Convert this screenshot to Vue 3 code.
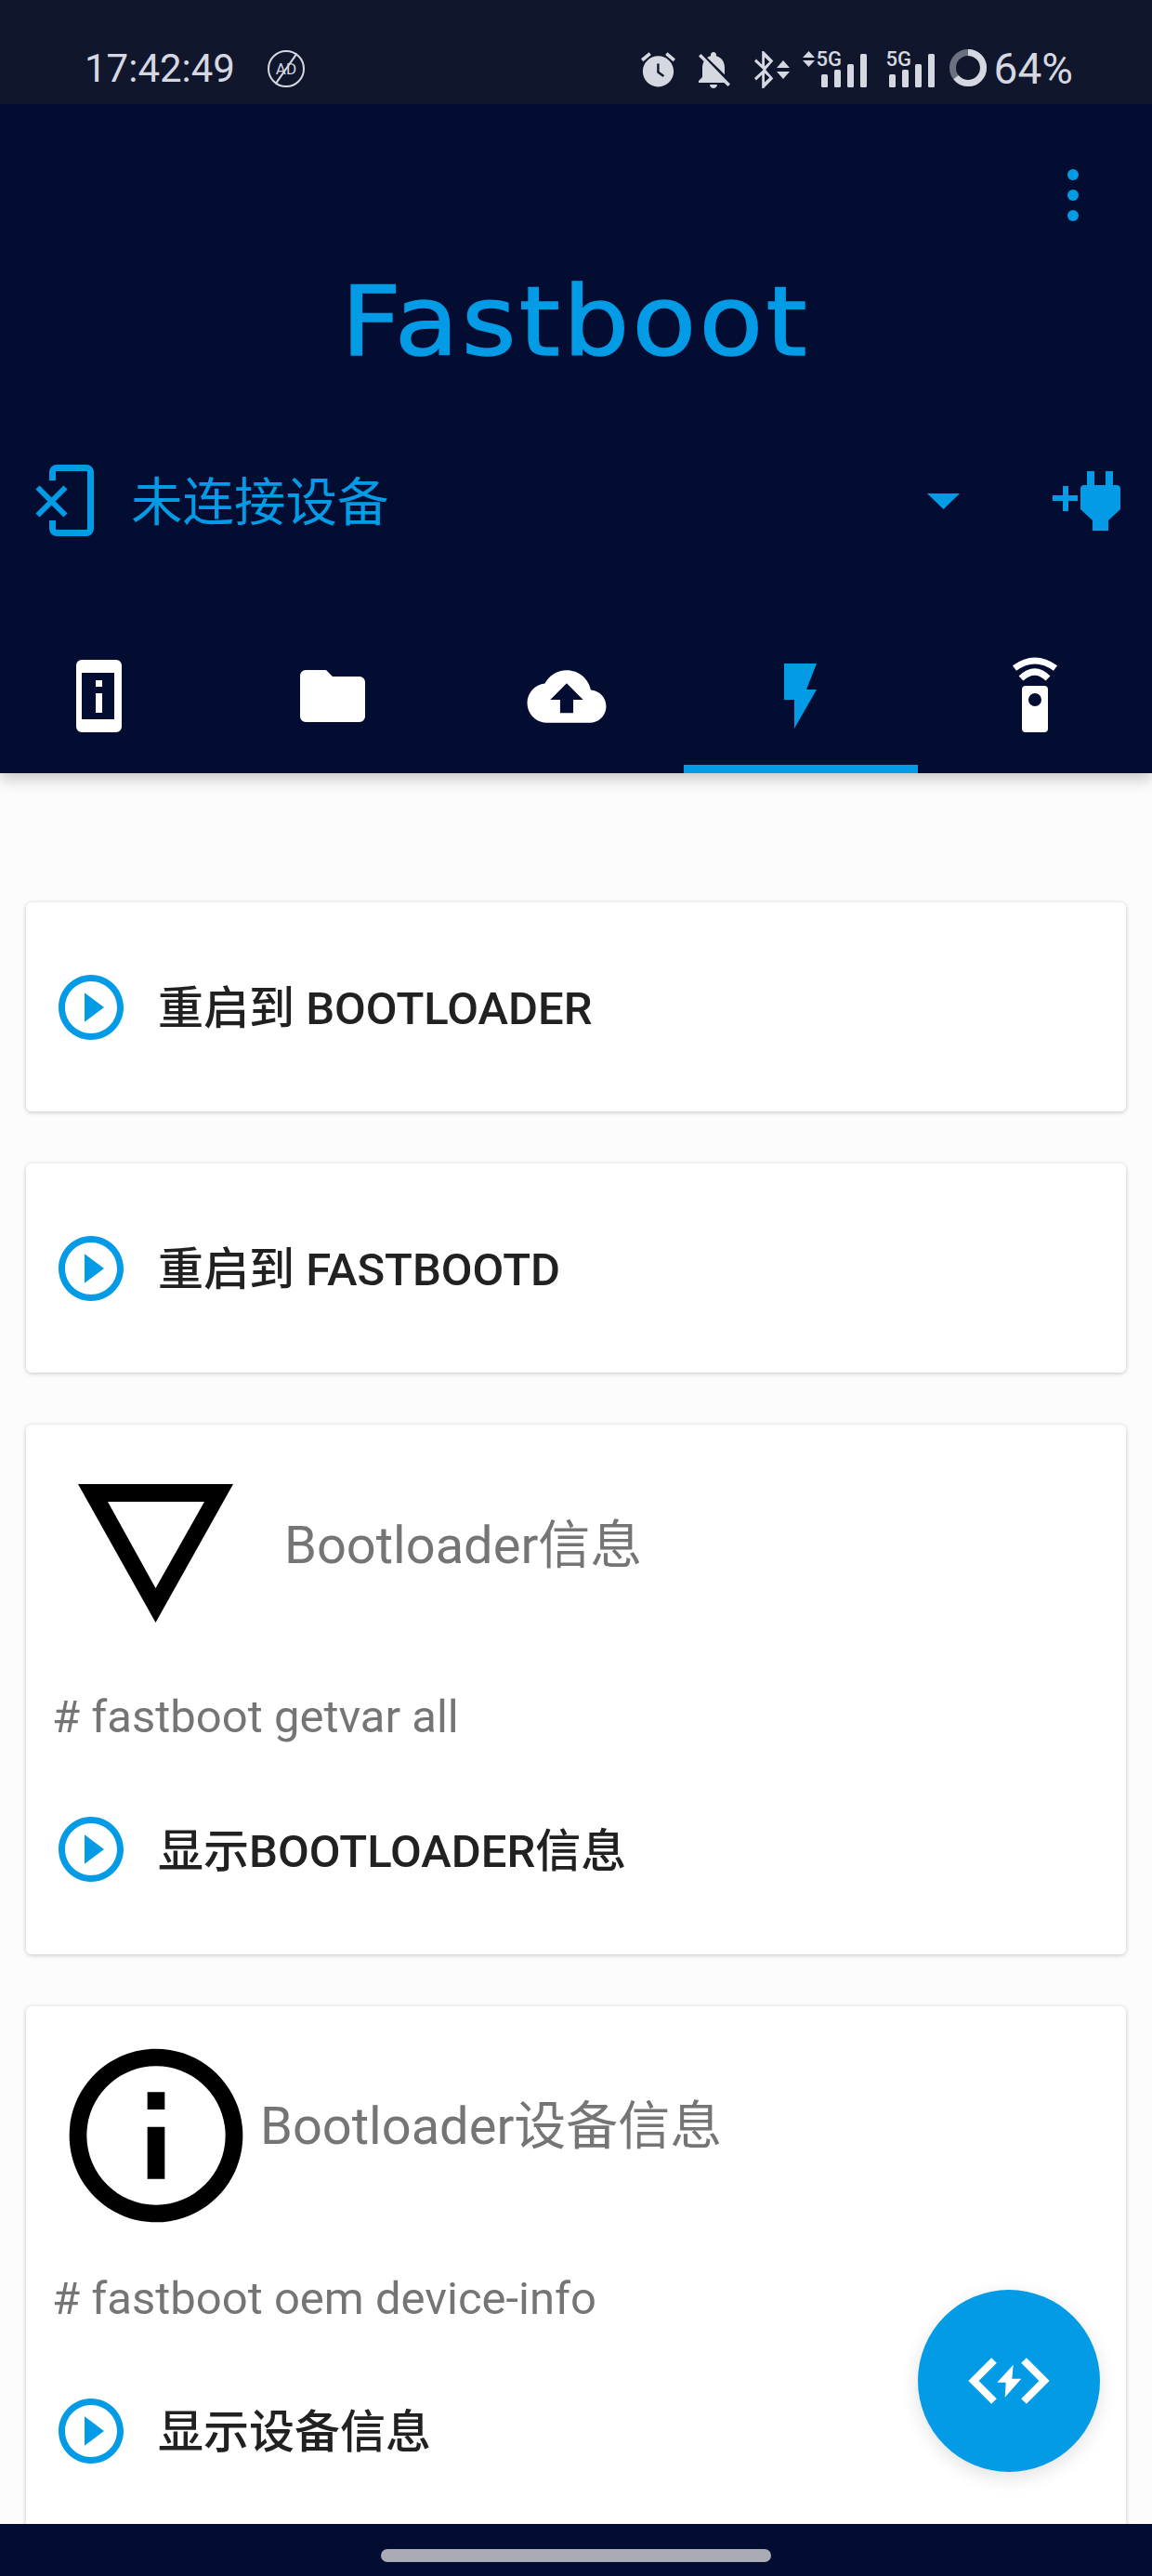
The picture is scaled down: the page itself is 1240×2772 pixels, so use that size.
<template>
  <div class="screen">
    <header class="appbar">
      <div class="status">
        <div class="status-left">
          <span class="clock">17:42:49</span>
          <span class="ad-badge"><span>AD</span></span>
        </div>
        <div class="status-right">
          <svg class="st-alarm" width="37" height="40" viewBox="2 1.5 20 21">
            <path fill="#d5d8e0" d="M22 5.72l-4.6-3.86-1.29 1.53 4.6 3.86L22 5.72zM7.88 3.39L6.6 1.86 2 5.71l1.29 1.53 4.59-3.85zM12 4c-4.97 0-9 4.03-9 9s4.02 9 9 9c4.97 0 9-4.03 9-9s-4.03-9-9-9z" />
            <path fill="#10162b" d="M11.3 8.5h1.3v4.6l3 2.2-.8 1-3.5-2.6z" />
          </svg>
          <svg class="st-bell" width="37" height="40" viewBox="3 2 18.5 20">
            <path fill="#d5d8e0" d="M20 18.69L7.84 6.14 5.27 3.49 4 4.76l2.8 2.8v.01c-.52.99-.8 2.16-.8 3.42v5l-2 2v1h13.73l2 2L21 19.72l-1-1.03zM12 22c1.11 0 2-.89 2-2h-4c0 1.11.89 2 2 2zm6-7.32V11c0-3.08-1.64-5.64-4.5-6.32V4c0-.83-.67-1.5-1.5-1.5s-1.5.67-1.5 1.5v.68c-.15.03-.29.08-.42.12-.1.03-.2.07-.3.11h-.01c-.2.08-.4.17-.59.27-.2.1-.4.2-.59.31L18 14.68z" />
          </svg>
          <svg class="st-bt" width="38" height="40" viewBox="0 0 38 40">
            <path fill="#d5d8e0" d="M20.3 10.5L10 0H8.2v14.5L1.9 8.400 0 10.900 9.600 20 0 29.100l1.900 2.500 6.300-6.100V40H10l10.300-10.500L12.200 20zM11 6.500l5.300 4.900L11 16.200zm0 17.300l5.300 4.800L11 33.500z" />
            <path fill="#d5d8e0" d="M31 10l7 8H24zM24 22h14l-7 8z" />
          </svg>
          <div class="signal first">
            <svg width="70" height="40" viewBox="0 0 70 40">
              <path d="M6.500 0L13 7H0zM0 10h13l-6.500 7z" />
              <rect x="20" y="25" width="7" height="14" rx="1.500" />
              <rect x="34" y="20" width="7" height="19" rx="1.500" />
              <rect x="48" y="14" width="7" height="25" rx="1.500" />
              <rect x="62" y="3" width="7" height="36" rx="1.500" />
            </svg>
            <span class="g5">5G</span>
          </div>
          <div class="signal second">
            <svg width="53" height="40" viewBox="0 0 53 40">
              <rect x="3" y="25" width="7" height="14" rx="1.500" />
              <rect x="17" y="20" width="7" height="19" rx="1.500" />
              <rect x="31" y="14" width="7" height="25" rx="1.500" />
              <rect x="45" y="3" width="7" height="36" rx="1.500" />
            </svg>
            <span class="g5">5G</span>
          </div>
          <svg class="st-ring" width="40" height="40" viewBox="0 0 40 40">
            <circle cx="20" cy="20" r="16.500" fill="none" stroke="#6c7180" stroke-width="7" />
            <circle cx="20" cy="20" r="16.500" fill="none" stroke="#d5d8e0" stroke-width="7" stroke-dasharray="66.300 103.700" transform="rotate(-90 20 20)" />
          </svg>
          <span class="battery">64%</span>
        </div>
      </div>

      <div class="toolbar">
        <div class="more"><span></span><span></span><span></span></div>
      </div>
      <h1 class="logo"><span>Fastboot</span></h1>

      <div class="device-row">
        <svg width="68" height="82" viewBox="0 0 68 82" fill="none" stroke="#039be5">
          <path stroke-width="7" d="M20.500 19V10a4.500 4.500 0 0 1 4.500-4.500H57a4.500 4.500 0 0 1 4.500 4.500V71a4.500 4.500 0 0 1-4.500 4.500H25a4.500 4.500 0 0 1-4.500-4.500V62" />
          <path stroke-width="6" d="M4.500 26.500l30 30M34.500 26.500l-30 30" />
        </svg>
        <span class="device-name">未连接设备</span>
        <svg class="caret" width="35" height="17" viewBox="0 0 35 17"><path fill="#039be5" d="M0 0h35L17.500 17z" /></svg>
        <svg class="plug" width="74" height="64" viewBox="0 0 74 64" fill="#039be5">
          <path d="M0 26h11V16h6v10h10v6H17v11h-6V32H0z" />
          <path d="M37 0h8v15h12V0h8v15h4a4 4 0 0 1 4 4V41L60 53V64H43V53L30 41V19a4 4 0 0 1 4-4h3z" />
        </svg>
      </div>

      <nav class="tabs">
        <div class="tab">
          <svg width="90" height="90" viewBox="0 0 90 90">
            <path fill="#fff" fill-rule="evenodd" d="M27 6h37a6 6 0 0 1 6 6v66a6 6 0 0 1-6 6H27a6 6 0 0 1-6-6V12a6 6 0 0 1 6-6zM27 20v50h35V20zM42 28h7v7h-7zM42 42h7v21h-7z" />
          </svg>
        </div>
        <div class="tab">
          <svg width="90" height="90" viewBox="0 0 90 90">
            <path fill="#fff" d="M16 17H38L45 24H74a6 6 0 0 1 6 6V67a6 6 0 0 1-6 6H16a6 6 0 0 1-6-6V23a6 6 0 0 1 6-6z" />
          </svg>
        </div>
        <div class="tab">
          <svg width="90" height="90" viewBox="0 0 90 90">
            <path fill="#fff" transform="translate(2.500 3) scale(3.540)" d="M19.350 10.040C18.670 6.590 15.640 4 12 4 9.110 4 6.600 5.640 5.350 8.040 2.340 8.360 0 10.910 0 14c0 3.310 2.690 6 6 6h13c2.760 0 5-2.240 5-5 0-2.640-2.050-4.780-4.650-4.960zM14 13v4h-4v-4H7l5-5 5 5h-3z" />
          </svg>
        </div>
        <div class="tab active">
          <svg width="90" height="90" viewBox="0 0 90 90">
            <path fill="#039be5" d="M27 10H62L51 38H62L38 80V49H27z" />
          </svg>
        </div>
        <div class="tab">
          <svg width="90" height="90" viewBox="0 0 90 90">
            <path fill="none" stroke="#fff" stroke-width="7" d="M23 15Q45-1 67 15M30 26Q45 12 59 26" />
            <path fill="#fff" fill-rule="evenodd" d="M35 34h20a4 4 0 0 1 4 4v42a4 4 0 0 1-4 4H35a4 4 0 0 1-4-4V38a4 4 0 0 1 4-4zM45 42a7 7 0 1 0 0 14 7 7 0 0 0 0-14z" />
          </svg>
        </div>
      </nav>
    </header>

    <main class="content">
      <section v-for="item in items" :key="item.action" class="card">
        <template v-if="item.title">
          <div class="card-head">
            <svg v-if="item.icon === 'triangle'" width="224" height="224" viewBox="0 0 224 224">
              <path fill="#000" fill-rule="evenodd" d="M28 37H195L111.500 186zM60 56L111.500 149 164 56z" />
            </svg>
            <svg v-else width="224" height="224" viewBox="0 0 24 24">
              <path fill="#000" d="M11 7h2v2h-2zm0 4h2v6h-2zm1-9C6.480 2 2 6.480 2 12s4.480 10 10 10 10-4.480 10-10S17.520 2 12 2zm0 18c-4.410 0-8-3.590-8-8s3.590-8 8-8 8 3.590 8 8-3.590 8-8 8z" />
            </svg>
            <h2 class="card-title" :class="{ tight: item.icon === 'info' }">{{ item.title }}</h2>
          </div>
          <p class="cmd">{{ item.cmd }}</p>
        </template>
        <div class="action" :class="{ spaced: item.title }">
          <svg width="84" height="84" viewBox="0 0 24 24">
            <path fill="#039be5" d="M10 16.500l6-4.500-6-4.500v9zM12 2C6.480 2 2 6.480 2 12s4.480 10 10 10 10-4.480 10-10S17.520 2 12 2zm0 18c-4.410 0-8-3.590-8-8s3.590-8 8-8 8 3.590 8 8-3.590 8-8 8z" />
          </svg>
          <span class="action-label">{{ item.action }}</span>
        </div>
      </section>

      <button class="fab">
        <svg width="90" height="60" viewBox="-45 -30 90 60">
          <path fill="none" stroke="#fff" stroke-width="8" d="M-16-22L-38 0-16 22M16-22L38 0 16 22" />
          <path fill="#fff" d="M4.700-17.300L-12.700 1.700H-3.300L-4.300 17.700 13.300-2.300H3.300z" />
        </svg>
      </button>
    </main>

    <footer class="navbar"><span class="pill"></span></footer>
  </div>
</template>

<script setup>
const items = [
  { action: '重启到 BOOTLOADER' },
  { action: '重启到 FASTBOOTD' },
  { icon: 'triangle', title: 'Bootloader信息', cmd: '# fastboot getvar all', action: '显示BOOTLOADER信息' },
  { icon: 'info', title: 'Bootloader设备信息', cmd: '# fastboot oem device-info', action: '显示设备信息' },
]
</script>

<style scoped>
.screen {
  width: 1240px;
  height: 2772px;
  display: flex;
  flex-direction: column;
  overflow: hidden;
  background: #fcfcfc;
  font-family: Roboto, "Noto Sans CJK SC", sans-serif;
}
.appbar {
  position: relative;
  z-index: 2;
  background: #030d32;
  box-shadow: 0 6px 16px rgba(0, 0, 0, 0.22);
}
.status {
  height: 112px;
  background: #10162b;
  color: #d5d8e0;
  display: flex;
  justify-content: space-between;
  padding: 49px 85px 0 91px;
  box-sizing: border-box;
}
.status-left,
.status-right {
  display: flex;
  align-items: flex-start;
}
.clock,
.battery {
  line-height: 50px;
}
.clock {
  font-size: 42px;
}
.ad-badge {
  width: 40px;
  height: 40px;
  margin: 5px 0 0 35px;
  position: relative;
  box-sizing: border-box;
  border: 2px solid #d5d8e0;
  border-radius: 50%;
  font-size: 17px;
  line-height: 36px;
  text-align: center;
}
.ad-badge::after {
  content: '';
  position: absolute;
  left: 17px;
  top: -2px;
  width: 2px;
  height: 40px;
  background: #d5d8e0;
  transform: rotate(35deg);
}
.st-alarm { margin-top: 6px; }
.st-bell { margin: 6px 0 0 23px; }
.st-bt { margin: 6px 0 0 25px; }
.signal {
  position: relative;
  margin-top: 6px;
  fill: #d5d8e0;
  height: 40px;
}
.signal.first { margin-left: 14px; }
.signal.second { margin-left: 20px; }
.g5 {
  position: absolute;
  top: -3px;
  font-size: 22px;
  line-height: 24px;
  font-weight: 500;
}
.first .g5 { left: 15px; }
.second .g5 { left: 0; }
.st-ring { margin: 4px 0 0 15px; }
.battery { margin-left: 8px; font-size: 46px; }
.toolbar {
  height: 126px;
  display: flex;
  justify-content: flex-end;
  align-items: flex-end;
  padding-right: 79px;
}
.more {
  display: flex;
  flex-direction: column;
  gap: 10px;
}
.more span {
  width: 12px;
  height: 12px;
  border-radius: 50%;
  background: #039be5;
}
.logo {
  margin: 48px 0 0;
  height: 120px;
  line-height: 120px;
  text-align: center;
  font-family: "DejaVu Sans", sans-serif;
  font-size: 104px;
  font-weight: 400;
  color: #039be5;
  -webkit-text-stroke: 1.5px #039be5;
}
.logo span {
  display: inline-block;
  letter-spacing: 3px;
  transform: scaleX(1.08);
}
.device-row {
  margin-top: 92px;
  height: 82px;
  padding: 0 33px 0 36px;
  display: flex;
  align-items: center;
}
.device-name {
  margin: 0 0 6px 37px;
  font-size: 55.5px;
  color: #039be5;
  font-weight: 400;
}
.caret {
  margin-left: auto;
}
.plug {
  margin-left: 100px;
}
.tabs {
  margin: 100px 0 0 -20px;
  display: flex;
}
.tab {
  flex: none;
  width: 252px;
  height: 152px;
  box-sizing: border-box;
  padding-bottom: 6px;
  border-bottom: 9px solid transparent;
  display: flex;
  align-items: center;
  justify-content: center;
}
.tab.active {
  border-bottom-color: #039be5;
}
.content {
  position: relative;
  flex: 1;
  min-height: 0;
  overflow: hidden;
  padding: 139px 28px 0;
  display: flex;
  flex-direction: column;
  gap: 56px;
}
.card {
  flex: none;
  background: #fff;
  border-radius: 6px;
  box-shadow: 0 1px 5px rgba(0, 0, 0, 0.22);
  padding: 70.5px 28px;
}
.card:has(.card-head) {
  padding-top: 27px;
}
.card-head {
  display: flex;
  align-items: center;
}
.card-title {
  margin: 0 0 30px 26px;
  font-size: 56px;
  font-weight: 400;
  color: #757575;
}
.card-title.tight {
  margin-left: 0;
}
.cmd {
  margin: 32px 0 0;
  font-size: 49px;
  line-height: 64px;
  color: #757575;
}
.action {
  display: flex;
  align-items: center;
  gap: 30px;
}
.action.spaced {
  margin-top: 68px;
}
.action-label {
  margin-bottom: 6px;
  font-size: 49px;
  font-weight: 500;
  color: #212121;
}
.fab {
  position: absolute;
  right: 56px;
  bottom: 56px;
  width: 196px;
  height: 196px;
  border: none;
  border-radius: 50%;
  background: #039be5;
  box-shadow: 0 6px 20px rgba(0, 0, 0, 0.12);
  display: flex;
  align-items: center;
  justify-content: center;
  padding: 0;
}
.navbar {
  position: relative;
  z-index: 2;
  height: 56px;
  background: #030d32;
  display: flex;
  align-items: center;
  justify-content: center;
}
.pill {
  width: 420px;
  height: 14px;
  margin-top: 12px;
  border-radius: 7px;
  background: #a9abb5;
}
</style>
